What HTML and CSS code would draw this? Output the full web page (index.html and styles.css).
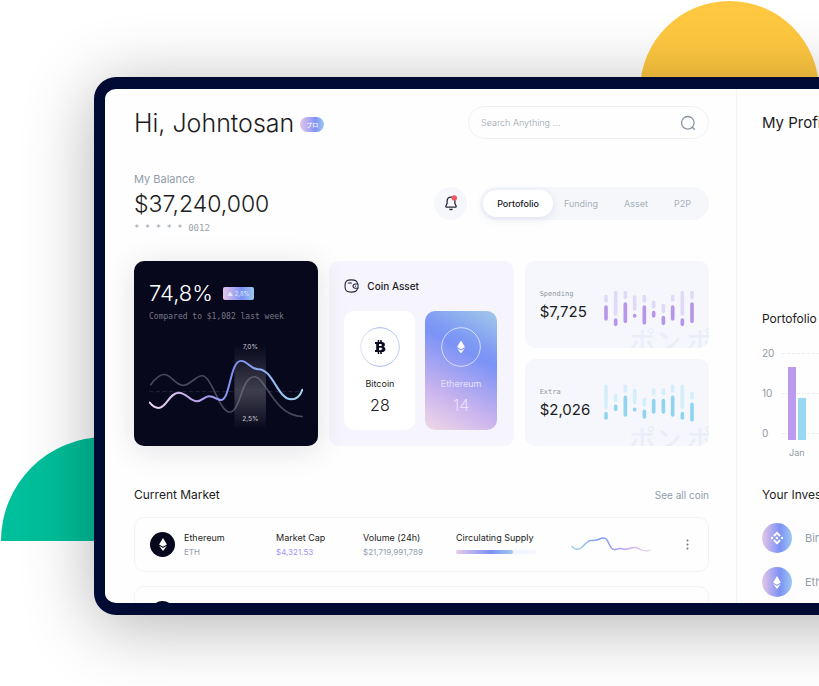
FILE: index.html
```html
<!DOCTYPE html>
<html lang="en">
<head>
<meta charset="utf-8">
<meta name="viewport" content="width=device-width, initial-scale=1">
<title>Portofolio dashboard</title>
<link rel="stylesheet" href="styles.css">
</head>
<body>
<svg class="defs" width="0" height="0" aria-hidden="true">
  <defs>
    <linearGradient id="wave" x1="0" x2="1" y1="0" y2="0"><stop offset="0" stop-color="#f3dcec"/><stop offset=".3" stop-color="#bba4ee"/><stop offset=".55" stop-color="#7c90f3"/><stop offset="1" stop-color="#a6daf0"/></linearGradient>
    <linearGradient id="spark" x1="0" x2="1" y1="0" y2="0"><stop offset="0" stop-color="#9fd4ee"/><stop offset=".4" stop-color="#7e95f5"/><stop offset=".7" stop-color="#c3aaf0"/><stop offset="1" stop-color="#f1dcec"/></linearGradient>
    <linearGradient id="beam" x1="0" x2="0" y1="0" y2="1"><stop offset="0" stop-color="#fff" stop-opacity="0"/><stop offset=".55" stop-color="#fff" stop-opacity=".22"/><stop offset="1" stop-color="#fff" stop-opacity="0"/></linearGradient>
    <linearGradient id="ring" x1="0" x2="1" y1="0" y2="0"><stop offset="0" stop-color="#ecd9f3"/><stop offset=".5" stop-color="#a3b2f3"/><stop offset="1" stop-color="#b7d3f3"/></linearGradient>
    <symbol id="eth" viewBox="0 0 12 20"><path fill="currentColor" d="M6 0 12 10 6 13.500 0 10Z"/><path fill="currentColor" d="M0 11.800 6 15.300 12 11.800 6 20Z"/></symbol>
  </defs>
</svg>
<div class="sun"></div>
<div class="hill"></div>
<div class="device">
  <main class="main">
    <header class="top">
      <h1>Hi, Johntosan</h1>
      <span class="pro" lang="ja">プロ</span>
      <form class="search" role="search">
        <input type="search" aria-label="Search" placeholder="Search Anything ...">
        <button type="button" aria-label="Search">
          <svg width="16" height="16" viewBox="0 0 16 16" fill="none" stroke="#8795a3" stroke-width="1.300" stroke-linecap="round"><circle cx="7.800" cy="7.800" r="6.300"/><path d="m12.300 12.300 2 2"/></svg>
        </button>
      </form>
    </header>

    <section class="summary">
      <div class="balance">
        <h2>My Balance</h2>
        <p class="total">$37,240,000</p>
        <p class="account">* * * * * 0012</p>
      </div>
      <button class="bell" type="button" aria-label="Notifications">
        <svg width="16" height="18" viewBox="0 0 16 18"><path d="M8 3.200c-2.500 0-3.900 1.900-3.900 4.100v2.200L2.900 12c-.3.700.1 1.200.8 1.200h8.600c.7 0 1.100-.5.800-1.200l-1.200-2.500V7.300c0-2.200-1.400-4.100-3.900-4.100Z" fill="none" stroke="#2b2b33" stroke-width="1.300" stroke-linejoin="round"/><path d="M6 14.700h4c-.3 1-1.100 1.600-2 1.600s-1.700-.6-2-1.600Z" fill="#2b2b33"/><circle cx="11.300" cy="4" r="2.700" fill="#f0585f"/></svg>
      </button>
      <nav class="tabs">
        <a class="active" href="#portofolio">Portofolio</a>
        <a href="#funding">Funding</a>
        <a href="#asset">Asset</a>
        <a href="#p2p">P2P</a>
      </nav>
    </section>

    <section class="cards">
      <article class="growth">
        <div class="growth-head"><strong>74,8%</strong><span class="delta">▲ 2,8%</span></div>
        <p>Compared to $1,082 last week</p>
        <svg class="growth-chart" viewBox="72 280 466 270" fill="none" stroke-linecap="round">
          <rect x="330" y="285" width="95" height="255" fill="url(#beam)"/>
          <path d="M74 427H534" stroke="#34344a" stroke-width="2" stroke-dasharray="10 10"/>
          <path d="M77 406C90 388 103 375 118 375C138 375 152 408 174 408C197 408 213 379 232 379C262 379 285 489 316 489C348 489 350 382 390 382C425 382 450 502 535 502" stroke="#8a8a98" stroke-opacity=".5" stroke-width="5"/>
          <path d="M74 460C82 470 92 476 101 476C125 476 133 430 162 430C185 430 195 456 217 456C232 456 240 441 253 441C268 441 280 452 289 452C318 452 316 334 350 334C370 334 380 360 402 359C447 359 460 450 502 450C520 450 530 436 535 421" stroke="url(#wave)" stroke-width="6"/>
          <text x="378" y="299" text-anchor="middle">7,0%</text>
          <text x="378" y="515" text-anchor="middle">2,5%</text>
        </svg>
      </article>

      <article class="coins">
        <h2>
          <svg width="15" height="14" viewBox="0 0 15 14" fill="none" stroke="#25253a" stroke-width="1.100" stroke-linecap="round"><path d="M13.500 4.700C13.100 1.800 11.600.9 7.500.9 2.500.9 1 2.300 1 7s1.500 6.100 6.500 6.100c4.100 0 5.600-.9 6-3.800"/><path d="M14 5h-2.800a2.100 2.100 0 0 0 0 4.300H14Z" stroke-linejoin="round"/><path d="M4.300 4h3.200M11.300 7.100h.2"/></svg>
          Coin Asset
        </h2>
        <div class="coin-pair">
          <div class="coin">
            <svg class="coin-mark" viewBox="0 0 40 40"><circle cx="20" cy="20" r="19.300" fill="none" stroke="url(#ring)"/><path fill="#0a0a20" fill-rule="evenodd" d="M15 15h2.700v-2h1.500v2h1v-2h1.600v2.100c2 .3 3.100 1.100 3.100 2.600 0 1-.6 1.800-1.600 2.100 1.300.3 2.100 1.100 2.100 2.400 0 1.900-1.300 2.700-3.600 2.900V27h-1.600v-1.900h-1V27h-1.500v-1.900H15V23h1.200v-6H15Zm4 1.900v2.200h1.200c1.200 0 1.700-.3 1.700-1.100s-.5-1.100-1.700-1.100Zm0 3.900v2.400h1.400c1.300 0 1.900-.4 1.900-1.200s-.6-1.200-1.900-1.200Z"/></svg>
            <h3>Bitcoin</h3>
            <p>28</p>
          </div>
          <div class="coin coin-hot">
            <svg class="coin-mark" viewBox="0 0 40 40"><circle cx="20" cy="20" r="19.300" fill="none" stroke="#fff" stroke-opacity=".65"/><use href="#eth" x="16" y="13.500" width="8" height="13"/></svg>
            <h3>Ethereum</h3>
            <p>14</p>
          </div>
        </div>
      </article>

      <div class="flows">
        <article class="flow">
          <span class="ghost" aria-hidden="true" lang="ja">ポン ポ</span>
          <div><h2>Spending</h2><p>$7,725</p></div>
          <svg viewBox="263 99 270 132" fill="none" stroke-width="11" stroke-linecap="round">
            <path stroke="#e0d9f8" d="M269 140V152M298 128V192M327 128V142M355 141V177M384 140V152M412 157V170M441 167V184M469 140V149M498 128V192M527 128V142"/>
            <path stroke="#b695ea" d="M269 171V206M298 210V223M327 162V214M355 197V198M384 171V218M412 188V197M441 203V220M469 171V206M498 210V223M527 162V214"/>
          </svg>
        </article>
        <article class="flow">
          <span class="ghost" aria-hidden="true" lang="ja">ポン ポ</span>
          <div><h2>Extra</h2><p>$2,026</p></div>
          <svg viewBox="263 391 270 132" fill="none" stroke-width="11" stroke-linecap="round">
            <path stroke="#d5eefb" d="M269 407V470M298 435V449M327 407V421M355 420V456M384 446V462M412 418V429M441 418V429M469 407V421M498 407V470M527 428V442"/>
            <path stroke="#91d4ef" d="M269 489V502M298 467V476M327 440V493M355 476V477M384 482V499M412 450V484M441 450V484M469 440V493M498 489V502M527 461V507"/>
          </svg>
        </article>
      </div>
    </section>

    <section class="market">
      <div class="market-head"><h2>Current Market</h2><a href="#coins">See all coin</a></div>
      <ul>
        <li>
          <span class="token"><svg width="8" height="13"><use href="#eth"/></svg></span>
          <div><h3>Ethereum</h3><p>ETH</p></div>
          <div><h3>Market Cap</h3><p class="cap">$4,321.53</p></div>
          <div><h3>Volume (24h)</h3><p>$21,719,991,789</p></div>
          <div><h3>Circulating Supply</h3><div class="supply"><span></span></div></div>
          <svg class="spark" viewBox="0 0 80 17" fill="none" stroke="url(#spark)" stroke-width="1.500" stroke-linecap="round"><path d="M1 10.500C3 13 7 14.500 10 12C14 9 16 4.500 20 4.500C27 5 28 2 33 2C38 2 38 13.500 43 13.500C46 13.500 47 12 50 12.500C56 15 60 11 64 11.500C69 12 71 17 79 14"/></svg>
          <button type="button" aria-label="More"><svg width="3" height="11" fill="#6d7782"><circle cx="1.500" cy="1.500" r="1"/><circle cx="1.500" cy="5.500" r="1"/><circle cx="1.500" cy="9.500" r="1"/></svg></button>
        </li>
        <li>
          <span class="token"><svg width="8" height="13"><use href="#eth"/></svg></span>
          <div><h3>Ethereum</h3><p>ETH</p></div>
          <div><h3>Market Cap</h3><p class="cap">$4,321.53</p></div>
          <div><h3>Volume (24h)</h3><p>$21,719,991,789</p></div>
          <div><h3>Circulating Supply</h3><div class="supply"><span></span></div></div>
        </li>
      </ul>
    </section>
  </main>

  <aside class="side">
    <h2 class="profile">My Profile</h2>
    <section class="history">
      <h2>Portofolio</h2>
      <div class="plot">
        <ul><li>20</li><li>10</li><li>0</li></ul>
        <div class="bars"><span class="in"></span><span class="out"></span></div>
      </div>
      <p class="month">Jan</p>
    </section>
    <section class="invest">
      <h2>Your Invest</h2>
      <ul>
        <li><span><svg width="14" height="14" viewBox="0 0 14 14" fill="#fff"><path d="M7 .5 10.800 4.300 9.400 5.700 7 3.300 4.600 5.700 3.200 4.300ZM7 13.500 3.200 9.700 4.600 8.300 7 10.700 9.400 8.300 10.800 9.700ZM7 5.400 8.600 7 7 8.600 5.400 7ZM2 5.600 3.400 7 2 8.400.6 7ZM12 5.600 13.400 7 12 8.400 10.600 7Z"/></svg></span>Binance</li>
        <li><span><svg width="8" height="13"><use href="#eth"/></svg></span>Ethereum</li>
      </ul>
    </section>
  </aside>
</div>
</body>
</html>
```
FILE: styles.css
```css
* { box-sizing: border-box; margin: 0; padding: 0; }
body {
  position: relative;
  height: 100vh;
  padding: 77px 0 71px 94px;
  overflow: hidden;
  background: #fff;
  color: #1c1c22;
  font-family: Inter, "Noto Sans CJK JP", sans-serif;
}
h1, h2, h3 { font-weight: 400; }
ul { list-style: none; }
a { color: inherit; text-decoration: none; }
button { border: 0; background: none; color: inherit; cursor: pointer; }
svg { display: block; }
.defs, .sun, .hill { position: absolute; }
.sun { top: 1px; right: 0; width: 179px; height: 90px; border-radius: 90px 90px 0 0; background: #ffc840; }
.hill { bottom: 145px; left: 1px; width: 208px; height: 104px; border-radius: 104px 104px 0 0; background: #00bf9a; }

.device {
  position: relative;
  display: grid;
  grid-template-columns: 1fr 271px;
  height: 100%;
  margin-right: -200px;
  overflow: hidden;
  border: 12px solid #000b33;
  border-left-width: 11px;
  border-radius: 22px;
  background: #fefefe;
  box-shadow: 0 10px 70px rgba(0, 0, 0, .3);
}
.main { padding: 17px 27px 0 29px; }

.top { display: flex; align-items: center; height: 33px; margin-bottom: 32px; }
.top h1 { font-size: 25px; font-weight: 300; }
.pro {
  margin: 3px auto 0 6px;
  padding: 0 6px;
  border-radius: 8px;
  background: linear-gradient(90deg, #e5c6e8, #8093f5 65%, #9cc9ef);
  color: #fff;
  font-size: 6px;
  font-weight: 500;
  line-height: 15px;
}
.search { display: flex; align-items: center; width: 241px; height: 33px; padding: 0 12px; border: 1px solid #f0f0f4; border-radius: 17px; }
.search input { flex: 1; min-width: 0; border: 0; outline: 0; background: none; font: 300 9px Inter, sans-serif; }
.search input::placeholder { color: #9ba3ac; }

.summary { display: flex; align-items: center; margin-bottom: 26px; }
.balance { margin-right: auto; }
.balance h2 { color: #919daa; font-size: 11px; line-height: 16px; }
.total { font-size: 23px; font-weight: 300; line-height: 34px; }
.account { color: #9ba3ac; font: 9px/14px "DejaVu Sans Mono", monospace; }
.bell { display: grid; place-items: center; width: 33px; height: 33px; margin-right: 13px; border-radius: 50%; background: #f6f7fc; }
.tabs { display: flex; align-items: center; gap: 26px; height: 33px; padding: 3px 18px 3px 3px; border-radius: 17px; background: #f5f7fb; color: #a8b2bd; font-size: 9px; }
.tabs a { line-height: 27px; }
.tabs .active { margin-right: -15px; padding: 0 14px; border-radius: 14px; background: #fff; box-shadow: 0 2px 8px rgba(90, 100, 170, .14); color: #16161e; font-weight: 500; }

.cards { display: grid; grid-template-columns: repeat(3, 1fr); gap: 11px; margin-bottom: 39px; }
.growth, .coins { min-height: 185px; padding: 17px 15px 12px; border-radius: 10px; }
.growth { position: relative; background: #08081c; color: #fff; box-shadow: 0 4px 30px rgba(40, 40, 80, .14); }
.growth-head { display: flex; align-items: center; gap: 10px; height: 30px; }
.growth-head strong { font-size: 22px; font-weight: 300; }
.delta { padding: 0 4px; border-radius: 2px; background: linear-gradient(90deg, #e5c6e8, #7d91f5 60%, #9cc9ef); color: #dfe6ff; font-size: 6px; line-height: 13px; }
.growth p { margin: 2px 0 19px; color: #777785; font: 8px/14px "DejaVu Sans Mono", monospace; white-space: nowrap; }
.growth-chart { width: 100%; }
.growth-chart text { fill: #c9c9d2; font-size: 20px; }

.coins { padding-right: 17px; background: #f6f5fd; }
.coins h2 { display: flex; align-items: center; gap: 8px; height: 16px; margin-bottom: 17px; font-size: 10px; font-weight: 500; }
.coin-pair { display: grid; grid-template-columns: 1fr 1fr; gap: 10px; }
.coin { display: flex; flex-direction: column; align-items: center; height: 119px; padding-top: 16px; border-radius: 10px; background: #fff; }
.coin-mark { width: 40px; height: 40px; color: #fff; }
.coin h3 { margin-top: 9px; font-size: 9px; line-height: 16px; }
.coin p { font-size: 16px; font-weight: 300; line-height: 26px; }
.coin-hot { background: linear-gradient(28deg, #efd9e6, #cab4ee 28%, #7b93f6 64%, #7f9af4 72%, #a2cae9); color: #e6e2fb; }

.flows { display: grid; gap: 11px; }
.flow { position: relative; display: flex; align-items: center; justify-content: space-between; padding: 0 15px; overflow: hidden; border-radius: 10px; background: #f5f7fc; }
.flow h2 { color: #8f959f; font: 7px/14px "DejaVu Sans Mono", monospace; }
.flow p { font-size: 15px; line-height: 22px; }
.flow div, .flow svg { position: relative; }
.flow svg { width: 90px; height: 44px; }
.ghost { position: absolute; right: -4px; bottom: -10px; color: #ebeef9; font-family: "Noto Sans CJK JP", sans-serif; font-size: 26px; font-weight: 500; line-height: 36px; white-space: nowrap; }

.market-head { display: flex; align-items: center; justify-content: space-between; height: 20px; margin-bottom: 12px; }
.market-head h2, .side h2 { font-size: 12px; line-height: 20px; }
.market-head a { color: #919daa; font-size: 10px; }
.market li {
  display: grid;
  grid-template-columns: 34px 92fr 87fr 93fr 115fr 80fr 42fr;
  align-items: center;
  height: 55px;
  margin-bottom: 14px;
  padding: 0 15px;
  border: 1px solid #f3f3f6;
  border-radius: 10px;
}
.token { display: grid; place-items: center; width: 25px; height: 25px; border-radius: 50%; background: #08081c; color: #fff; }
.market h3 { font-size: 9px; line-height: 14px; white-space: nowrap; }
.market p { color: #919daa; font-size: 8px; line-height: 14px; }
.market .cap { color: #a394f2; }
.supply { width: 80px; height: 4px; margin: 5px 0; border-radius: 2px; background: #f4f4fc; }
.supply span { display: block; width: 71%; height: 4px; border-radius: 2px; background: linear-gradient(90deg, #e5cbec, #7d91f4 60%, #9dcbed); }
.spark { width: 100%; }
.market button { justify-self: end; padding: 4px; }

.side { padding: 17px 0 0 25px; border-left: 1px solid #f3f3f6; }
.side .profile { height: 203px; font-size: 15px; line-height: 33px; }
.plot { position: relative; height: 94px; margin: 17px 0 6px; }
.plot ul { display: flex; flex-direction: column; justify-content: space-between; height: 100%; }
.plot li { display: grid; grid-template-columns: 20px 1fr; align-items: center; color: #8f99a5; font-size: 10px; line-height: 14px; }
.plot li::after { border-top: 1px dashed #ececf1; content: ""; }
.bars { position: absolute; bottom: 0; left: 26px; display: flex; align-items: flex-end; gap: 2px; }
.bars span { width: 8px; }
.bars .in { height: 73px; background: #bc9af0; }
.bars .out { height: 42px; background: #98d8f0; }
.month { margin: 0 0 25px 27px; color: #8f99a5; font-size: 9px; line-height: 14px; }
.invest ul { display: grid; gap: 14px; margin-top: 18px; }
.invest li { display: flex; align-items: center; gap: 13px; color: #919daa; font-size: 11px; }
.invest li span { display: grid; place-items: center; width: 30px; height: 30px; border-radius: 50%; background: linear-gradient(90deg, #e5c6e8, #7d91f5 60%, #9cc9ef); color: #fff; }
```
